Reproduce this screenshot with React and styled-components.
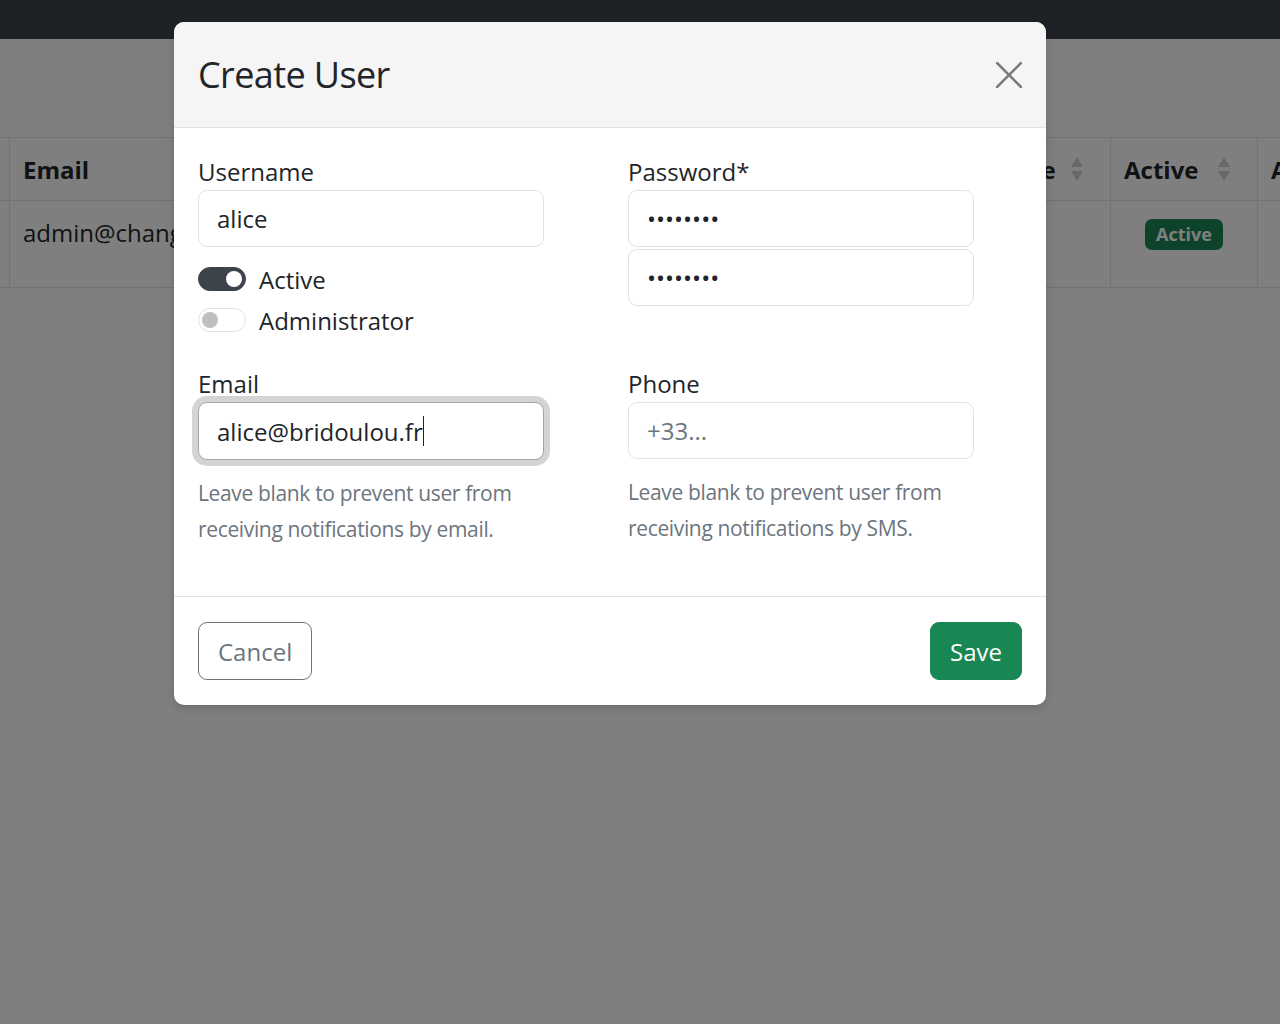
import React from "react";
import styled, { createGlobalStyle } from "styled-components";

const Global = createGlobalStyle`
  html, body { margin: 0; padding: 0; }
  body {
    font-family: "Open Sans", "Noto Sans", sans-serif;
    color: #212529;
    background: #ffffff;
    overflow: hidden;
  }
  * { box-sizing: border-box; }
`;

const Page = styled.div`
  width: 1280px;
  height: 1024px;
  position: relative;
  background: #ffffff;
`;

const Navbar = styled.div`
  height: 39px;
  background: #3d434a;
`;

const Content = styled.div`
  padding-top: 98px;
`;

const Table = styled.div`
  display: grid;
  grid-template-columns: 10px 420px 537px 144px 147px 1fr;
  border-top: 1.5px solid #dee2e6;
`;

const HeadCell = styled.div`
  height: 63px;
  display: flex;
  align-items: center;
  justify-content: space-between;
  padding: ${(p) => (p.$edge ? "0" : "0 26px 0 13px")};
  font-weight: 700;
  font-size: 24px;
  color: #212529;
  border-right: 1.5px solid #dee2e6;
  border-bottom: 1.5px solid #dee2e6;
  white-space: nowrap;
  overflow: hidden;
`;

const BodyCell = styled.div`
  height: 87px;
  padding: ${(p) => (p.$edge ? "0" : "14px 13px 0")};
  font-size: 24px;
  line-height: 36px;
  color: #212529;
  border-right: 1.5px solid #dee2e6;
  border-bottom: 1.5px solid #dee2e6;
  white-space: nowrap;
  overflow: hidden;
  display: flex;
  justify-content: ${(p) => (p.$center ? "center" : "flex-start")};
  align-items: flex-start;
`;

const Badge = styled.span`
  margin-top: 4px;
  display: inline-block;
  background: #198754;
  color: #ffffff;
  font-weight: 700;
  font-size: 18px;
  line-height: 23px;
  padding: 4px 11px;
  border-radius: 7px;
`;

const SortIcon = () => (
  <svg width="14" height="26" viewBox="0 0 14 26">
    <polygon points="7,1 13,11 1,11" fill="#cfd1d3" />
    <polygon points="7,25 13,15 1,15" fill="#cfd1d3" />
  </svg>
);

const Backdrop = styled.div`
  position: absolute;
  inset: 0;
  background: rgba(0, 0, 0, 0.5);
  padding: 22px 0 0 174px;
`;

const Modal = styled.div`
  width: 872px;
  background: #ffffff;
  border-radius: 10px;
  overflow: hidden;
  box-shadow: 0 3px 10px rgba(0, 0, 0, 0.15);
`;

const Header = styled.div`
  background: #f5f5f5;
  padding: 24px;
  border-bottom: 1.5px solid #dee2e6;
  display: flex;
  align-items: center;
  justify-content: space-between;
`;

const Title = styled.h4`
  margin: 0;
  font-size: 36px;
  line-height: 57px;
  font-weight: 400;
  letter-spacing: -0.6px;
  color: #212529;
`;

const CloseButton = styled.button`
  width: 26px;
  height: 26px;
  padding: 0;
  border: 0;
  background: transparent;
  display: flex;
  align-items: center;
  justify-content: center;
  cursor: pointer;
`;

const Body = styled.div`
  padding: 26px 24px 49px;
  display: grid;
  grid-template-columns: 1fr 1fr;
  column-gap: 36px;
  row-gap: 28px;
`;

const Field = styled.div`
  display: flex;
  flex-direction: column;
  align-items: flex-start;
`;

const Label = styled.label`
  font-size: 24px;
  line-height: 36px;
  color: #212529;
`;

const Input = styled.input`
  width: 346px;
  height: 57px;
  margin-top: ${(p) => p.$mt || 0}px;
  padding: 0 18px;
  font-family: inherit;
  font-size: 24px;
  color: #212529;
  background: #ffffff;
  border: 1.5px solid #dee2e6;
  border-radius: 9px;
  outline: none;
  &::placeholder { color: #6c757d; }
`;

const FocusedBox = styled.div`
  width: 346px;
  height: 58px;
  padding: 0 18px;
  display: flex;
  align-items: center;
  font-size: 24px;
  color: #212529;
  background: #ffffff;
  border: 1.5px solid #a3a6a9;
  border-radius: 9px;
  box-shadow: 0 0 0 6px rgba(155, 159, 163, 0.45);
  white-space: nowrap;
`;

const Caret = styled.span`
  display: inline-block;
  width: 1.5px;
  height: 30px;
  background: #212529;
  margin-left: 0;
`;

const Switches = styled.div`
  margin-top: 14px;
  display: flex;
  flex-direction: column;
  gap: 5px;
`;

const SwitchRow = styled.div`
  display: flex;
  align-items: center;
  height: 36px;
  gap: 13px;
  font-size: 24px;
  color: #212529;
`;

const Track = styled.span`
  position: relative;
  width: 48px;
  height: 24px;
  border-radius: 12px;
  background: ${(p) => (p.$on ? "#3d434a" : "#ffffff")};
  border: 1.5px solid ${(p) => (p.$on ? "#3d434a" : "#dee2e6")};
`;

const Knob = styled.span`
  position: absolute;
  top: 2.5px;
  left: ${(p) => (p.$on ? "27px" : "2.5px")};
  width: 16px;
  height: 16px;
  border-radius: 50%;
  background: ${(p) => (p.$on ? "#ffffff" : "#bfbfbf")};
`;

const Help = styled.div`
  margin-top: 15px;
  font-size: 21px;
  line-height: 36px;
  letter-spacing: -0.35px;
  color: #6c757d;
  width: 346px;
`;

const Footer = styled.div`
  border-top: 1.5px solid #dee2e6;
  padding: 25px 24px 25px;
  display: flex;
  justify-content: space-between;
  align-items: center;
`;

const Button = styled.button`
  height: 58px;
  padding: 0 19px;
  font-family: inherit;
  font-size: 24px;
  border-radius: 9px;
  border: 1.5px solid ${(p) => (p.$primary ? "#198754" : "#6c757d")};
  background: ${(p) => (p.$primary ? "#198754" : "#ffffff")};
  color: ${(p) => (p.$primary ? "#ffffff" : "#6c757d")};
  cursor: pointer;
`;

const Switch = ({ on, children }) => (
  <SwitchRow>
    <Track $on={on}>
      <Knob $on={on} />
    </Track>
    {children}
  </SwitchRow>
);

export default function App() {
  return (
    <Page>
      <Global />
      <Navbar />
      <Content>
        <Table>
          <HeadCell $edge />
          <HeadCell>Email</HeadCell>
          <HeadCell>Name</HeadCell>
          <HeadCell>
            Phone <SortIcon />
          </HeadCell>
          <HeadCell>
            Active <SortIcon />
          </HeadCell>
          <HeadCell>Admin</HeadCell>
          <BodyCell $edge />
          <BodyCell>admin@change.me</BodyCell>
          <BodyCell>Administrator</BodyCell>
          <BodyCell />
          <BodyCell $center>
            <Badge>Active</Badge>
          </BodyCell>
          <BodyCell />
        </Table>
      </Content>
      <Backdrop>
        <Modal>
          <Header>
            <Title>Create User</Title>
            <CloseButton aria-label="Close">
              <svg width="26" height="26" viewBox="0 0 26 26">
                <path d="M1 1 L25 25 M25 1 L1 25" stroke="#7a7a7a" strokeWidth="2.6" strokeLinecap="square" />
              </svg>
            </CloseButton>
          </Header>
          <Body>
            <Field>
              <Label>Username</Label>
              <Input defaultValue="alice" />
              <Switches>
                <Switch on>Active</Switch>
                <Switch>Administrator</Switch>
              </Switches>
            </Field>
            <Field>
              <Label>Password*</Label>
              <Input type="password" defaultValue="12345678" />
              <Input type="password" defaultValue="12345678" $mt={2} />
            </Field>
            <Field>
              <Label>Email</Label>
              <FocusedBox role="textbox">
                alice@bridoulou.fr
                <Caret />
              </FocusedBox>
              <Help>Leave blank to prevent user from receiving notifications by email.</Help>
            </Field>
            <Field>
              <Label>Phone</Label>
              <Input placeholder="+33..." />
              <Help>Leave blank to prevent user from receiving notifications by SMS.</Help>
            </Field>
          </Body>
          <Footer>
            <Button>Cancel</Button>
            <Button $primary>Save</Button>
          </Footer>
        </Modal>
      </Backdrop>
    </Page>
  );
}
